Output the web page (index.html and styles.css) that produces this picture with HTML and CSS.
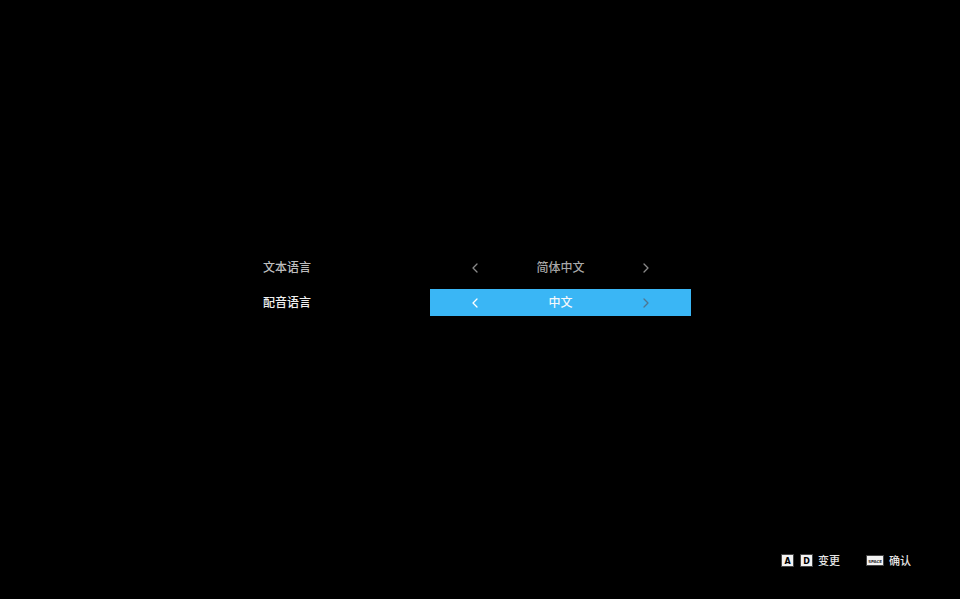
FILE: index.html
```html
<!DOCTYPE html>
<html lang="zh">
<head>
<meta charset="utf-8">
<link rel="stylesheet" href="styles.css">
</head>
<body>
<div class="screen">
  <main class="settings">
    <div class="row">
      <div class="label">文本语言</div>
      <div class="selector">
        <svg class="chev chev-dim" width="8" height="10" viewBox="0 0 8 10"><polyline points="6,1 2,5 6,9"/></svg>
        <span class="value">简体中文</span>
        <svg class="chev chev-dim" width="8" height="10" viewBox="0 0 8 10"><polyline points="2,1 6,5 2,9"/></svg>
      </div>
    </div>
    <div class="row active">
      <div class="label">配音语言</div>
      <div class="selector">
        <svg class="chev chev-on" width="8" height="10" viewBox="0 0 8 10"><polyline points="6,1 2,5 6,9"/></svg>
        <span class="value">中文</span>
        <svg class="chev chev-off" width="8" height="10" viewBox="0 0 8 10"><polyline points="2,1 6,5 2,9"/></svg>
      </div>
    </div>
  </main>
  <footer class="hints">
    <div class="hint">
      <span class="key">A</span>
      <span class="key">D</span>
      <span class="hint-text">变更</span>
    </div>
    <div class="hint">
      <span class="key key-space">SPACE</span>
      <span class="hint-text">确认</span>
    </div>
  </footer>
</div>
</body>
</html>
```
FILE: styles.css
```css
html, body {
  margin: 0;
  padding: 0;
  background: #000;
}
body {
  font-family: "Noto Sans CJK SC", "Noto Sans", sans-serif;
  color: #ddd;
}
.screen {
  width: 960px;
  height: 599px;
  display: flex;
  flex-direction: column;
  justify-content: space-between;
  box-sizing: border-box;
  padding: 254px 49px 31px 263px;
}
.settings {
  display: flex;
  flex-direction: column;
  gap: 8px;
}
.row {
  display: flex;
  align-items: center;
  height: 27px;
}
.label {
  width: 167px;
  font-size: 12px;
  line-height: 16px;
  padding-bottom: 2px;
  font-weight: 500;
  color: #bdbdbd;
}
.row.active .label {
  color: #f0f0f0;
}
.selector {
  width: 261px;
  height: 27px;
  display: flex;
  align-items: center;
  justify-content: space-between;
  box-sizing: border-box;
  padding: 0 41px;
}
.row.active .selector {
  background: #3ab6f5;
}
.value {
  font-size: 12px;
  line-height: 16px;
  padding-bottom: 2px;
  font-weight: 500;
  color: #a8a8a8;
}
.row.active .value {
  color: #f4f8fb;
}
.chev polyline {
  fill: none;
  stroke-width: 1.3;
  stroke-linecap: round;
  stroke-linejoin: round;
}
.chev-dim polyline { stroke: #8a8a8a; }
.chev-on polyline { stroke: #ffffff; }
.chev-off polyline { stroke: #4f7590; }
.hints {
  display: flex;
  justify-content: flex-end;
  align-items: center;
  gap: 27px;
}
.hint {
  display: flex;
  align-items: center;
  gap: 6px;
}
.hint .key + .key {
  margin-left: 2px;
}
.key {
  width: 11px;
  height: 11px;
  box-sizing: border-box;
  background: #f2f2f2;
  color: #000;
  font-family: "DejaVu Sans", sans-serif;
  font-weight: bold;
  font-size: 8px;
  line-height: 11px;
  text-align: center;
  border: 1px solid #f2f2f2;
  outline: 1px solid #444;
}
.key-space {
  width: 16px;
  height: 9px;
  font-size: 4px;
  line-height: 9px;
  color: #333;
  letter-spacing: -0.1px;
  overflow: hidden;
}
.hint-text {
  font-size: 11px;
  line-height: 14px;
  padding-bottom: 1px;
  font-weight: 500;
  color: #e6e6e6;
}
```
